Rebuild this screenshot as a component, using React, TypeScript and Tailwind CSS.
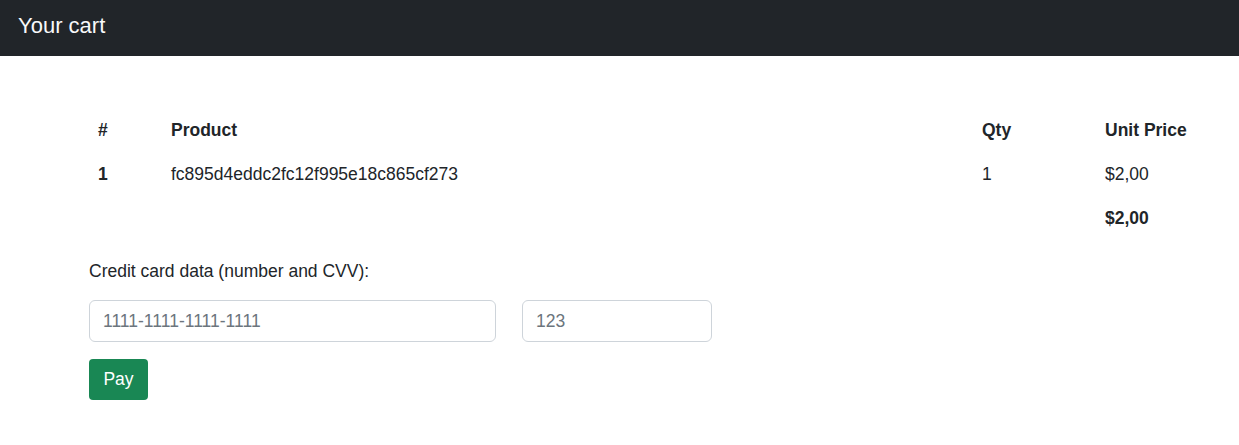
import React from 'react';

const items = [{ id: 1, product: 'fc895d4eddc2fc12f995e18c865cf273', qty: 1, price: '$2,00' }];

export default function App() {
  return (
    <div className="min-h-screen bg-white text-[#212529] text-[17.5px]" style={{ fontFamily: '"Liberation Sans", Arial, sans-serif' }}>
      {/* Navbar */}
      <nav className="h-[56px] bg-[#212529] flex items-center px-[18px] pb-[6px]">
        <span className="text-[22px] text-[#f8f9fa]">Your cart</span>
      </nav>

      <div className="pl-[90px] pt-[52px]">
        {/* Cart table */}
        <table className="w-[1106px] table-fixed border-collapse">
          <colgroup>
            <col className="w-[73px]" />
            <col className="w-[811px]" />
            <col className="w-[123px]" />
            <col />
          </colgroup>
          <thead>
            <tr className="h-[44px]">
              <th className="text-left font-bold px-2">#</th>
              <th className="text-left font-bold px-2">Product</th>
              <th className="text-left font-bold px-2">Qty</th>
              <th className="text-left font-bold px-2">Unit Price</th>
            </tr>
          </thead>
          <tbody>
            {items.map(item => (
              <tr key={item.id} className="h-[44px]">
                <td className="px-2 font-bold">{item.id}</td>
                <td className="px-2">{item.product}</td>
                <td className="px-2">{item.qty}</td>
                <td className="px-2">{item.price}</td>
              </tr>
            ))}
            <tr className="h-[44px]">
              <td className="px-2"></td>
              <td className="px-2"></td>
              <td className="px-2"></td>
              <td className="px-2 font-bold">$2,00</td>
            </tr>
          </tbody>
        </table>

        {/* Payment form */}
        <div className="-ml-px mt-[18px]">
          <label className="block leading-[26px]">Credit card data (number and CVV):</label>
          <div className="flex gap-[26px] mt-[16px]">
            <input
              type="text"
              placeholder="1111-1111-1111-1111"
              className="w-[407px] h-[42px] px-[13px] border border-[#ced4da] rounded-[6px] placeholder:text-[#6c757d] outline-none"
            />
            <input
              type="text"
              placeholder="123"
              className="w-[190px] h-[42px] px-[13px] border border-[#ced4da] rounded-[6px] placeholder:text-[#6c757d] outline-none"
            />
          </div>
          <button className="mt-[17px] w-[59px] h-[41px] bg-[#198754] text-white rounded-[4px]">
            Pay
          </button>
        </div>
      </div>
    </div>
  );
}
